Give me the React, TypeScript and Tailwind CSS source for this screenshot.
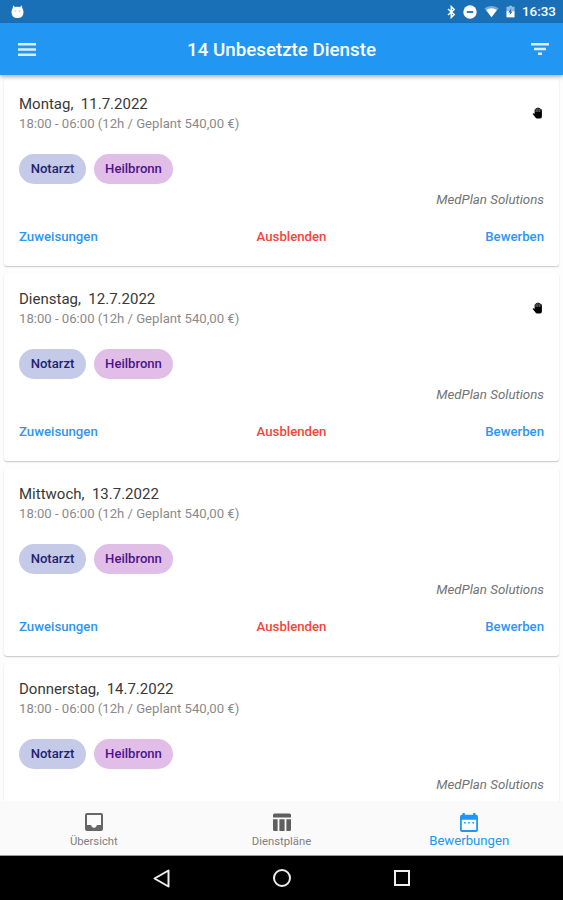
import React from 'react';

type Shift = { day: string; date: string; hand: boolean; actions: boolean };

const shifts: Shift[] = [
  { day: 'Montag,', date: '11.7.2022', hand: true, actions: true },
  { day: 'Dienstag,', date: '12.7.2022', hand: true, actions: true },
  { day: 'Mittwoch,', date: '13.7.2022', hand: false, actions: true },
  { day: 'Donnerstag,', date: '14.7.2022', hand: false, actions: false },
];

function Hand() {
  return (
    <svg className="mr-px mt-[13px] h-[12px] w-[11px]" viewBox="0 0 11 12" fill="#000">
      <path d="M2.6 3.2Q2.6 2 3.7 2Q3.9.9 5 1.1Q6 .1 7 1.1Q8.2.9 8.4 2Q9.9 2 9.9 3.4V9.5Q9.9 11.5 8 11.5H5.3Q4 11.5 3.1 10L.5 6.8Q1.3 5.6 2.6 6.9Z" />
      <path d="M4.1 1.6V5M5.9 1.2V5M7.8 1.6V5" stroke="#999" strokeWidth=".8" fill="none" />
    </svg>
  );
}

function ShiftCard({ day, date, hand, actions }: Shift) {
  return (
    <article className="mx-1 flex h-[187px] shrink-0 flex-col rounded-[3px] bg-white px-[15px] pt-[15px] shadow-[0_1px_1.5px_rgba(0,0,0,0.22)]">
      <div className="flex h-[60px] justify-between">
        <div>
          <h2 className="h-5 whitespace-pre text-[15px] leading-5 text-[#383838]">{day + '  ' + date}</h2>
          <p className="h-5 whitespace-nowrap text-[13.13px] leading-5 text-[#8a8a8a]">18:00 - 06:00 (12h / Geplant 540,00 €)</p>
        </div>
        {hand && <Hand />}
      </div>
      <div className="flex h-[30px] gap-2 text-[13.1px] font-medium">
        <span className="flex w-[67px] items-center justify-center rounded-full bg-[#c5cae9] text-[#1f2370]">Notarzt</span>
        <span className="flex w-[79px] items-center justify-center rounded-full bg-[#e1bee7] text-[#4a148c]">Heilbronn</span>
      </div>
      <p className="mt-[5.5px] h-5 text-right text-[13.3px] italic leading-5 text-[#737373]">MedPlan Solutions</p>
      {actions && (
        <div className="mt-[17.5px] flex h-5 justify-between text-[13.2px] font-medium leading-5">
          <span className="text-[#2f95f2]">Zuweisungen</span>
          <span className="text-[#f4453a]">Ausblenden</span>
          <span className="text-[#2f95f2]">Bewerben</span>
        </div>
      )}
    </article>
  );
}

function StatusBar() {
  return (
    <div className="flex h-[23px] shrink-0 items-center justify-between bg-[#1a70b7] pl-[11px] pr-[6px] text-white">
      <svg className="h-[15px] w-[13px]" viewBox="0 0 13 15" fill="white">
        <path d="M2.4 1.2 3.8 3Q6.5 2.4 9.2 3L10.6 1.2 11.4 4.2Q12.5 6 12.5 8.5Q12.2 14 6.5 14Q.8 14 .5 8.5Q.5 6 1.6 4.2Z" />
        <path d="M3.6 7h1.6M7.8 7h1.6" stroke="#8fb9dc" strokeWidth=".9" />
      </svg>
      <div className="flex h-full items-center">
        <svg className="mr-[7px] h-[14px] w-[9px]" viewBox="0 0 9 14" fill="none" stroke="white" strokeWidth="1.5">
          <path d="M1 4 7.2 9.5 4.3 12.4V1.6L7.2 4.5 1 10" />
        </svg>
        <svg className="mr-[7px] h-[14px] w-[14px]" viewBox="0 0 14 14">
          <circle cx="7" cy="7" r="6.7" fill="white" />
          <path d="M3.8 7h6.4" stroke="#1a70b7" strokeWidth="1.8" />
        </svg>
        <svg className="mr-[7px] h-[13px] w-[15px]" viewBox="0 0 16 13">
          <path d="M.5 3Q8-2 15.5 3L8 12.5Z" fill="#76a9d4" />
          <path d="M2.3 5Q8 1 13.7 5L8 12.5Z" fill="white" />
        </svg>
        <svg className="mr-[7px] h-[13px] w-[9px]" viewBox="0 0 10 13">
          <path d="M3.3 0h3.4v1.3H9.5V6H.5V1.3h2.8Z" fill="#91badd" />
          <path d="M.5 6h9v7h-9Z" fill="white" />
          <path d="M5.8 3 2.6 7.5h2L4 10.7 7.3 6.4H5.4Z" fill="#1a70b7" />
        </svg>
        <span className="w-[35px] whitespace-nowrap pt-px text-[13.4px] font-medium leading-6">16:33</span>
      </div>
    </div>
  );
}

export default function App() {
  return (
    <div className="flex h-[900px] w-[563px] flex-col overflow-hidden bg-[#fdfdfd] font-['Roboto',sans-serif]">
      <StatusBar />
      <header className="z-10 flex h-[52px] shrink-0 items-center justify-between bg-[#2196f3] pl-[18px] pr-[14px] text-white shadow-[0_2px_4px_rgba(0,0,0,0.3)]">
        <svg className="h-[13px] w-[18px]" viewBox="0 0 18 13" fill="#dceefd">
          <path d="M0 0h18v2.6H0zM0 5.2h18v2.6H0zM0 10.4h18V13H0z" />
        </svg>
        <h1 className="mr-[4px] mt-[2px] text-[18.75px] font-medium leading-6">14 Unbesetzte Dienste</h1>
        <svg className="h-[12px] w-[18px]" viewBox="0 0 18 12" fill="#dceefd">
          <path d="M0 0h18v2.5H0zM3 4.8h12v2.5H3zM7 9.5h4V12H7z" />
        </svg>
      </header>
      <main className="flex min-h-0 flex-1 flex-col gap-2 overflow-hidden pt-1">
        {shifts.map((s) => <ShiftCard key={s.date} {...s} />)}
      </main>
      <nav className="flex h-[55px] shrink-0 items-start border-b border-[#999] bg-[#fafafa] text-[11.3px] text-[#808080]">
        <div className="flex flex-1 flex-col items-center pt-[12px]">
          <svg className="h-[18px] w-[18px]" viewBox="3 3 18 18" fill="#666">
            <path fillRule="evenodd" d="M5 3h14q2 0 2 2v14q0 2-2 2H5q-2 0-2-2V5q0-2 2-2Zm0 2v10h4q.8 3 3 3t3-3h4V5Z" />
          </svg>
          <span className="mt-[3px] leading-4">Übersicht</span>
        </div>
        <div className="flex flex-1 flex-col items-center pt-[12px]">
          <svg className="h-[18px] w-[18px]" viewBox="0 0 18 18" fill="#5f5f5f">
            <path d="M1.5.5h15q1.5 0 1.5 1.5v2.5H0V2Q0 .5 1.5.5ZM0 6.3h4.6V18H1.5Q0 18 0 16.5ZM6.4 6.3h5.2V18H6.4ZM13.4 6.3H18v10.2q0 1.5-1.5 1.5h-3.1Z" />
          </svg>
          <span className="mt-[3px] leading-4">Dienstpläne</span>
        </div>
        <div className="flex flex-1 flex-col items-center pt-[12px] text-[#2196f3]">
          <svg className="h-[19px] w-[18px]" viewBox="0 0 18 19" fill="currentColor">
            <path fillRule="evenodd" d="M2.5 0h2.3v1.7h8.4V0h2.3v1.7H16q2 0 2 2V17q0 2-2 2H2q-2 0-2-2V3.7q0-2 2-2h.5ZM1.8 6.8V17h14.4V6.8ZM4 8.9h1.6v1.5H4Zm4.2 0h1.6v1.5H8.2Zm4.2 0H14v1.5h-1.6Z" />
          </svg>
          <span className="mt-px text-[13.15px] leading-4">Bewerbungen</span>
        </div>
      </nav>
      <footer className="flex h-[44px] shrink-0 items-center justify-center gap-[102px] bg-black">
        <svg className="h-[19px] w-[18px]" viewBox="0 0 18 19" fill="none" stroke="#eee" strokeWidth="2" strokeLinejoin="round"><path d="M1.5 9.5 15.5 1.5v16Z" /></svg>
        <svg className="h-[18px] w-[18px]" viewBox="0 0 18 18" fill="none" stroke="#eee" strokeWidth="2"><circle cx="9" cy="9" r="8" /></svg>
        <svg className="h-[18px] w-[18px]" viewBox="0 0 18 18" fill="none" stroke="#eee" strokeWidth="2"><path d="M2 2h14v14H2Z" /></svg>
      </footer>
    </div>
  );
}
